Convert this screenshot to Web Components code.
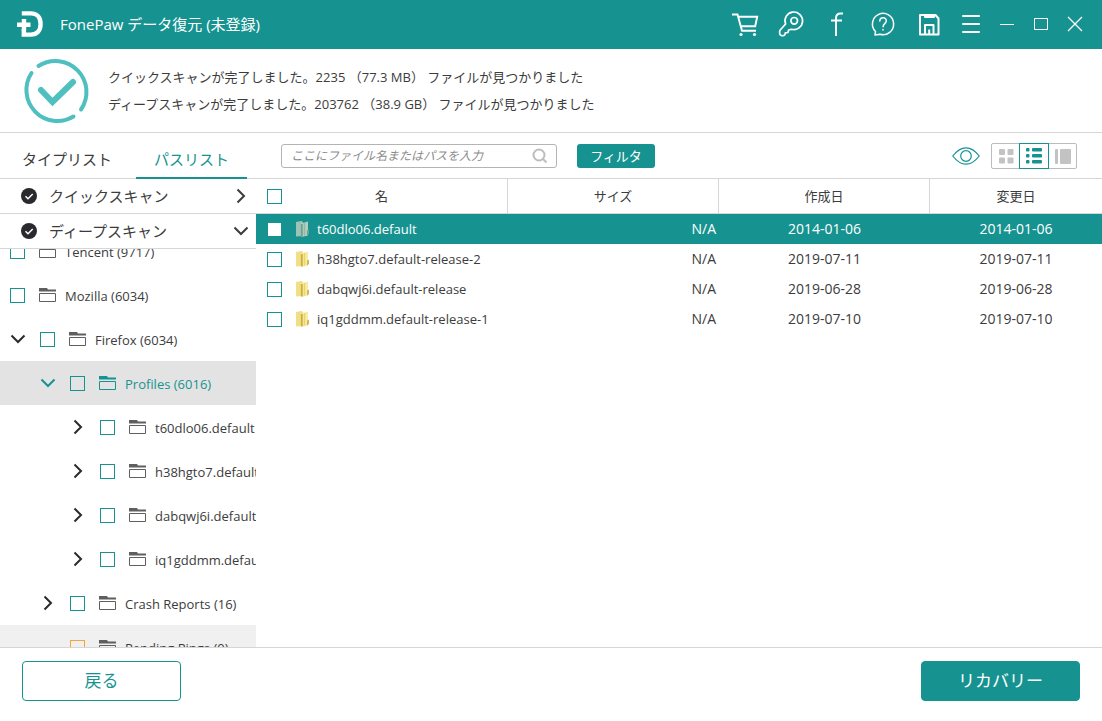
<!DOCTYPE html>
<html lang="ja">
<head>
<meta charset="utf-8">
<title>FonePaw データ復元</title>
<style>
  html, body { height: 100%; }
  body {
    margin: 0;
    font: 13px/20px "Open Sans", "Noto Sans CJK JP", sans-serif;
    color: #3c3c3c;
    background: #fff;
    --teal: #169390;
    --line: #d6d6d6;
  }
</style>
</head>
<body>
<recovery-app>
  <title-bar slot="title">FonePaw データ復元 (未登録)</title-bar>
  <scan-status slot="status">
    <p>クイックスキャンが完了しました。2235 （77.3 MB） ファイルが見つかりました</p>
    <p>ディープスキャンが完了しました。203762 （38.9 GB） ファイルが見つかりました</p>
  </scan-status>
  <list-toolbar slot="toolbar"></list-toolbar>
  <path-sidebar slot="sidebar">
    <scan-section slot="sections">クイックスキャン</scan-section>
    <scan-section slot="sections" open>ディープスキャン</scan-section>
    <tree-row depth="0">Tencent (9717)</tree-row>
    <tree-row depth="0">Mozilla (6034)</tree-row>
    <tree-row depth="0" toggle="open">Firefox (6034)</tree-row>
    <tree-row depth="1" toggle="open" selected>Profiles (6016)</tree-row>
    <tree-row depth="2" toggle="closed">t60dlo06.default</tree-row>
    <tree-row depth="2" toggle="closed">h38hgto7.default-release-2</tree-row>
    <tree-row depth="2" toggle="closed">dabqwj6i.default-release</tree-row>
    <tree-row depth="2" toggle="closed">iq1gddmm.default-release-1</tree-row>
    <tree-row depth="1" toggle="closed">Crash Reports (16)</tree-row>
    <tree-row depth="2" hovered>Pending Pings (0)</tree-row>
  </path-sidebar>
  <file-table slot="files"></file-table>
  <action-footer slot="footer">
    <span slot="back">戻る</span>
    <span slot="recover">リカバリー</span>
  </action-footer>
</recovery-app>

<script>
const base = `
  :host, *, *::before { box-sizing: border-box; }
  button { font: inherit; color: inherit; background: none; border: 0; padding: 0; margin: 0; cursor: pointer; }
  svg { display: block; flex: none; }
  input[type=checkbox] {
    appearance: none; flex: none; width: 15px; height: 15px; margin: 0;
    border: 1px solid var(--box, var(--teal)); background: var(--fill, #fff);
  }
  input[type=checkbox]:checked { background: var(--teal); }
`;

function define(name, css, html, setup) {
  customElements.define(name, class extends HTMLElement {
    constructor() {
      super();
      this.attachShadow({ mode: 'open' });
    }
    connectedCallback() {
      this.shadowRoot.innerHTML = `<style>${base}${css}</style>${typeof html === 'function' ? html(this) : html}`;
      if (setup) setup(this, this.shadowRoot);
    }
  });
}

const chevron = open => open
  ? `<svg width="16" height="16" viewBox="0 0 16 16" fill="none" stroke="currentColor" stroke-width="2"><path d="M1.5 4.5 8 11l6.5-6.5"/></svg>`
  : `<svg width="16" height="16" viewBox="0 0 16 16" fill="none" stroke="currentColor" stroke-width="2"><path d="M4.5 1.5 11 8l-6.5 6.5"/></svg>`;

define('recovery-app', `
  :host { display: flex; flex-direction: column; height: 100vh; }
  main { flex: 1; min-height: 0; display: grid; grid-template-columns: 256px minmax(0, 1fr); }
  slot { display: contents; }
`, `
  <slot name="title"></slot>
  <slot name="status"></slot>
  <slot name="toolbar"></slot>
  <main><slot name="sidebar"></slot><slot name="files"></slot></main>
  <slot name="footer"></slot>
`);

define('title-bar', `
  :host { display: flex; align-items: center; height: 49px; flex: none; padding: 0 10px 1px 16px; background: var(--teal); color: #fff; }
  h1 { flex: 1; margin: 0 0 0 16px; font-size: 15px; line-height: 24px; font-weight: 400; white-space: nowrap; }
  nav { display: flex; }
  button { width: 34px; height: 48px; display: grid; place-items: center; }
  .tool { width: 46px; }
  .menu { width: 38px; }
  svg { fill: none; stroke: #fff; }
`, `
  <svg width="28" height="28" viewBox="0 0 28 28" stroke-width="4.4">
    <path d="M5.8 3.4H15c6 0 9.6 4 9.6 10.6S21 24.6 15 24.6H7.8V19"/>
    <path d="M1 14.7h13.5M8 9v12"/>
  </svg>
  <h1><slot></slot></h1>
  <nav>
    <button class="tool" aria-label="購入"><svg width="28" height="28" viewBox="0 0 28 28" stroke-width="1.9">
      <path d="M1 4.5h5.5l4.5 16.3h14M7.2 6.8h19l-2 9.5H10"/>
      <circle cx="10" cy="24.5" r="1.6" fill="#fff" stroke="none"/><circle cx="23.5" cy="24.5" r="1.6" fill="#fff" stroke="none"/>
    </svg></button>
    <button class="tool" aria-label="登録"><svg width="28" height="28" viewBox="0 0 28 28" stroke-width="1.7" stroke-linejoin="round">
      <path d="M8.6 14 3.2 20c-1 1.5-.8 4.500.6 5.300 1.400.6 3.200.4 4-.5l.6-2 2.500-.3.8-2.500 2.800-.7A8.800 8.800 0 1 0 8.600 14Z"/>
      <circle cx="17.2" cy="10.8" r="3.3"/>
    </svg></button>
    <button class="tool" aria-label="Facebook"><svg width="28" height="28" viewBox="0 0 28 28" stroke-width="2">
      <path d="M20 3.5h-2.3c-3.4 0-4.7 1.8-4.7 4.7V26M8 10.500h11"/>
    </svg></button>
    <button class="tool" aria-label="ヘルプ"><svg width="28" height="28" viewBox="0 0 28 28" stroke-width="1.5" stroke-linecap="round" stroke-linejoin="round">
      <path d="M6.5 21.5A10.6 10.6 0 1 1 11 24.2L6 25Z"/>
      <path d="M10.800 11c.2-4.600 6.600-4.300 6.500-.2 0 2.800-3.200 2.900-3.200 6M14 19.500v.4"/>
    </svg></button>
    <button class="tool" aria-label="保存"><svg width="28" height="28" viewBox="0 0 28 28" stroke-width="2" stroke-linejoin="round">
      <path d="M5 5h15.500l3 3.500V24.500H5Z"/>
      <path d="M10 5v2h9V5Z" fill="#fff"/>
      <path d="M10 24V15h8.500v9M14.200 19.500V24"/>
    </svg></button>
    <button class="menu" aria-label="メニュー"><svg width="20" height="28" viewBox="0 0 20 28" stroke-width="2" stroke-linecap="round">
      <path d="M2 6h16M2 14h16M2 22h16"/>
    </svg></button>
    <button aria-label="最小化"><svg width="16" height="16" viewBox="0 0 16 16"><path d="M1 8.500h14"/></svg></button>
    <button aria-label="最大化"><svg width="16" height="16" viewBox="0 0 16 16"><path d="M1.500 2.500h13v11h-13Z"/></svg></button>
    <button aria-label="閉じる"><svg width="16" height="16" viewBox="0 0 16 16" stroke-width="1.3"><path d="m1 1 14 14M15 1 1 15"/></svg></button>
  </nav>
`);

define('scan-status', `
  :host { display: flex; align-items: center; flex: none; gap: 18px; height: 84px; padding: 0 22px; border-bottom: 1px solid var(--line); }
  ::slotted(p) { margin: 0; line-height: 27px; white-space: pre; }
`, `
  <svg width="68" height="68" viewBox="0 0 68 68" fill="none" stroke="#50bfc0" stroke-width="4" stroke-linecap="round">
    <path d="M16.500 9A31 31 0 0 1 59 52.500M51.500 59.500A31 31 0 0 1 9.500 16"/>
    <path d="m19 33 11.500 12L51 25" stroke-width="6"/>
  </svg>
  <div><slot></slot></div>
`);

define('list-toolbar', `
  :host { display: flex; align-items: center; flex: none; height: 46px; padding-right: 25px; border-bottom: 1px solid var(--line); }
  .tabs { display: flex; width: 256px; align-self: stretch; margin-right: 25px; }
  .tabs button { width: 111px; height: 46px; padding-top: 8px; font-size: 15px; border-bottom: 2px solid transparent; }
  .tabs button:first-child { width: 136px; padding-right: 2px; }
  .tabs button[aria-selected=true] { color: var(--teal); border-color: var(--teal); }
  .search { display: flex; align-items: center; width: 276px; height: 24px; padding: 0 8px 0 9px; border: 1px solid #b4b4b4; border-radius: 3px; }
  input { flex: 1; min-width: 0; border: 0; outline: 0; padding: 0; font: inherit; font-size: 12px; background: none; color: inherit; }
  input::placeholder { color: #8c8c8c; font-style: italic; opacity: 1; }
  .filter { width: 78px; height: 24px; margin-left: 20px; border-radius: 3px; background: var(--teal); color: #fff; }
  .eye { margin-left: auto; margin-right: 11px; }
  .views { display: flex; width: 86px; height: 26px; border: 1px solid #bcbcbc; border-radius: 2px; }
  .views button { flex: 1; display: grid; place-items: center; color: #c3c3c3; }
  .views button[aria-pressed=true] { flex: 0 0 30px; margin: -1px 0; border: 1px solid var(--teal); color: var(--teal); }
`, `
  <div class="tabs" role="tablist">
    <button role="tab" aria-selected="false">タイプリスト</button>
    <button role="tab" aria-selected="true">パスリスト</button>
  </div>
  <div class="search">
    <input type="text" aria-label="検索" placeholder="ここにファイル名またはパスを入力">
    <svg width="16" height="16" viewBox="0 0 16 16" fill="none" stroke="#bdbdbd" stroke-width="2"><circle cx="7" cy="7" r="5.5"/><path d="m11 11 3.500 3.500"/></svg>
  </div>
  <button class="filter">フィルタ</button>
  <button class="eye" aria-label="プレビュー">
    <svg width="28" height="20" viewBox="0 0 28 20" fill="none" stroke="#169390" stroke-width="1.2"><path d="M.8 10C5 4.500 9.500 1.800 14 1.800S23 4.500 27.200 10C23 15.500 18.500 18.200 14 18.200S5 15.500.8 10Z"/><circle cx="14" cy="10" r="5.3"/></svg>
  </button>
  <div class="views">
    <button aria-label="グリッド表示" aria-pressed="false"><svg width="16" height="16" viewBox="0 0 16 16" fill="currentColor"><rect x="1" y="1" width="6" height="6" rx="1"/><rect x="9.5" y="1" width="6" height="6" rx="1"/><rect x="1" y="9.5" width="6" height="6" rx="1"/><rect x="9.5" y="9.5" width="6" height="6" rx="1"/></svg></button>
    <button aria-label="リスト表示" aria-pressed="true"><svg width="18" height="16" viewBox="0 0 18 16" fill="currentColor"><rect x="1" y="0" width="3.500" height="3.500" rx="1"/><rect x="1" y="6" width="3.500" height="3.500" rx="1"/><rect x="1" y="12" width="3.500" height="3.500" rx="1"/><rect x="7" y="0" width="10" height="3.500" rx="1"/><rect x="7" y="6" width="10" height="3.500" rx="1"/><rect x="7" y="12" width="10" height="3.500" rx="1"/></svg></button>
    <button aria-label="詳細表示" aria-pressed="false"><svg width="16" height="16" viewBox="0 0 16 16" fill="currentColor"><rect x="0" y="1" width="3" height="15" rx="1"/><rect x="5" y="1" width="11" height="15" rx="1"/></svg></button>
  </div>
`);

define('path-sidebar', `
  :host { display: flex; flex-direction: column; min-height: 0; min-width: 0; }
  .tree { flex: 1; min-height: 0; overflow: hidden; }
  .scrolled { margin-top: -20px; }
`, `
  <slot name="sections"></slot>
  <div class="tree"><div class="scrolled"><slot></slot></div></div>
`);

define('scan-section', `
  :host { display: block; flex: none; }
  button { display: flex; align-items: center; gap: 12px; width: 100%; height: 35px; padding: 0 7px 0 21px; border-bottom: 1px solid var(--line); font-size: 15px; text-align: left; }
  span { flex: 1; }
`, host => `
  <button aria-expanded="${host.hasAttribute('open')}">
    <svg width="16" height="16" viewBox="0 0 16 16"><circle cx="8" cy="8" r="8" fill="#2a2a2e"/><path d="m4.500 8.200 2.500 2.500L11.700 6" fill="none" stroke="#fff" stroke-width="1.5"/></svg>
    <span><slot></slot></span>
    ${chevron(host.hasAttribute('open'))}
  </button>
`);

define('tree-row', `
  :host { display: flex; align-items: center; height: 44px; padding-left: calc(10px + 30px * var(--depth)); overflow: hidden; white-space: nowrap; --mark: #5f5f5f; --fill: transparent; }
  :host([selected]) { background: #e3e3e3; color: var(--teal); --mark: var(--teal); }
  :host([hovered]) { background: #f0f0f0; --box: #f0a63c; }
  button { width: 30px; height: 16px; flex: none; color: #2a2a2e; }
  :host([selected]) button { color: var(--teal); }
  .folder { margin: 0 9px 0 14px; color: var(--mark); }
  label { padding-top: 2px; }
`, host => {
  const toggle = host.getAttribute('toggle');
  return `
    ${toggle ? `<button aria-label="開閉" aria-expanded="${toggle === 'open'}">${chevron(toggle === 'open')}</button>` : ''}
    <input type="checkbox" id="pick">
    <svg class="folder" width="17" height="16" viewBox="0 0 17 16"><path d="M0 1h8l1 1.500h8v2H0Z" fill="currentColor"/><path d="M.5 6.500h16v8H.5Z" fill="none" stroke="currentColor"/></svg>
    <label for="pick"><slot></slot></label>
  `;
}, host => host.style.setProperty('--depth', host.getAttribute('depth')));

const files = [
  ['t60dlo06.default', '2014-01-06', '2014-01-06'],
  ['h38hgto7.default-release-2', '2019-07-11', '2019-07-11'],
  ['dabqwj6i.default-release', '2019-06-28', '2019-06-28'],
  ['iq1gddmm.default-release-1', '2019-07-10', '2019-07-10'],
];

const folder = `<svg width="13" height="16" viewBox="0 0 13 16">
  <path d="M0 1 5.500 0 7 1v14l-7 .5Z" fill="var(--f1, #f0df86)"/>
  <path d="M5 2.500 12 .5v14L5.500 16Z" fill="var(--f2, #f7eca6)"/>
  <path d="M5.800 3v12.500" stroke="var(--f3, #cfae3e)" stroke-width="1.8"/>
  <path d="M8.500 2v12.500" stroke="var(--f4, #e8d272)" stroke-width="1.5"/>
  <path d="M11 9.500 13 8.500V13l-2 1.500Z" fill="var(--f3, #d3b750)"/>
</svg>`;

define('file-table', `
  :host { display: block; min-width: 0; overflow: hidden; }
  table { width: 100%; table-layout: fixed; border-collapse: separate; border-spacing: 0; }
  .size, .created { width: 211px; }
  .modified { width: 172px; }
  th { height: 35px; padding: 0; font-weight: 400; border-bottom: 1px solid var(--line); border-right: 1px solid var(--line); }
  th:last-child { border-right: 0; }
  .all { display: grid; grid-template-columns: 1fr auto 1fr; align-items: center; padding: 0 11px; }
  td { height: 30px; padding: 0; text-align: center; font-size: 14px; }
  td:first-child { font-size: 13px; }
  td:nth-child(2) { text-align: right; padding-right: 3px; }
  .name { display: flex; align-items: center; padding-left: 11px; white-space: nowrap; }
  .name svg { margin: 0 8px 0 14px; }
  tr.on { background: var(--teal); color: #fff; --f1: #9dc4b2; --f2: #b0cfbf; --f3: #6f9f92; --f4: #93b9a8; }
`, `
  <table>
    <colgroup><col><col class="size"><col class="created"><col class="modified"></colgroup>
    <thead><tr>
      <th><div class="all"><input type="checkbox" aria-label="すべて選択"><span>名</span></div></th>
      <th>サイズ</th><th>作成日</th><th>変更日</th>
    </tr></thead>
    <tbody>${files.map(([name, created, modified], i) => `
      <tr class="${i ? '' : 'on'}">
        <td><div class="name"><input type="checkbox" id="file${i}">${folder}<label for="file${i}">${name}</label></div></td>
        <td>N/A</td><td>${created}</td><td>${modified}</td>
      </tr>`).join('')}
    </tbody>
  </table>
`);

define('action-footer', `
  :host { display: flex; align-items: center; justify-content: space-between; flex: none; height: 74px; padding: 0 22px 7px; border-top: 1px solid var(--line); }
  button { width: 159px; height: 40px; border: 1px solid var(--teal); border-radius: 4px; font-size: 17px; color: var(--teal); }
  .primary { background: var(--teal); color: #fff; }
`, `
  <button><slot name="back"></slot></button>
  <button class="primary"><slot name="recover"></slot></button>
`);
</script>
</body>
</html>
